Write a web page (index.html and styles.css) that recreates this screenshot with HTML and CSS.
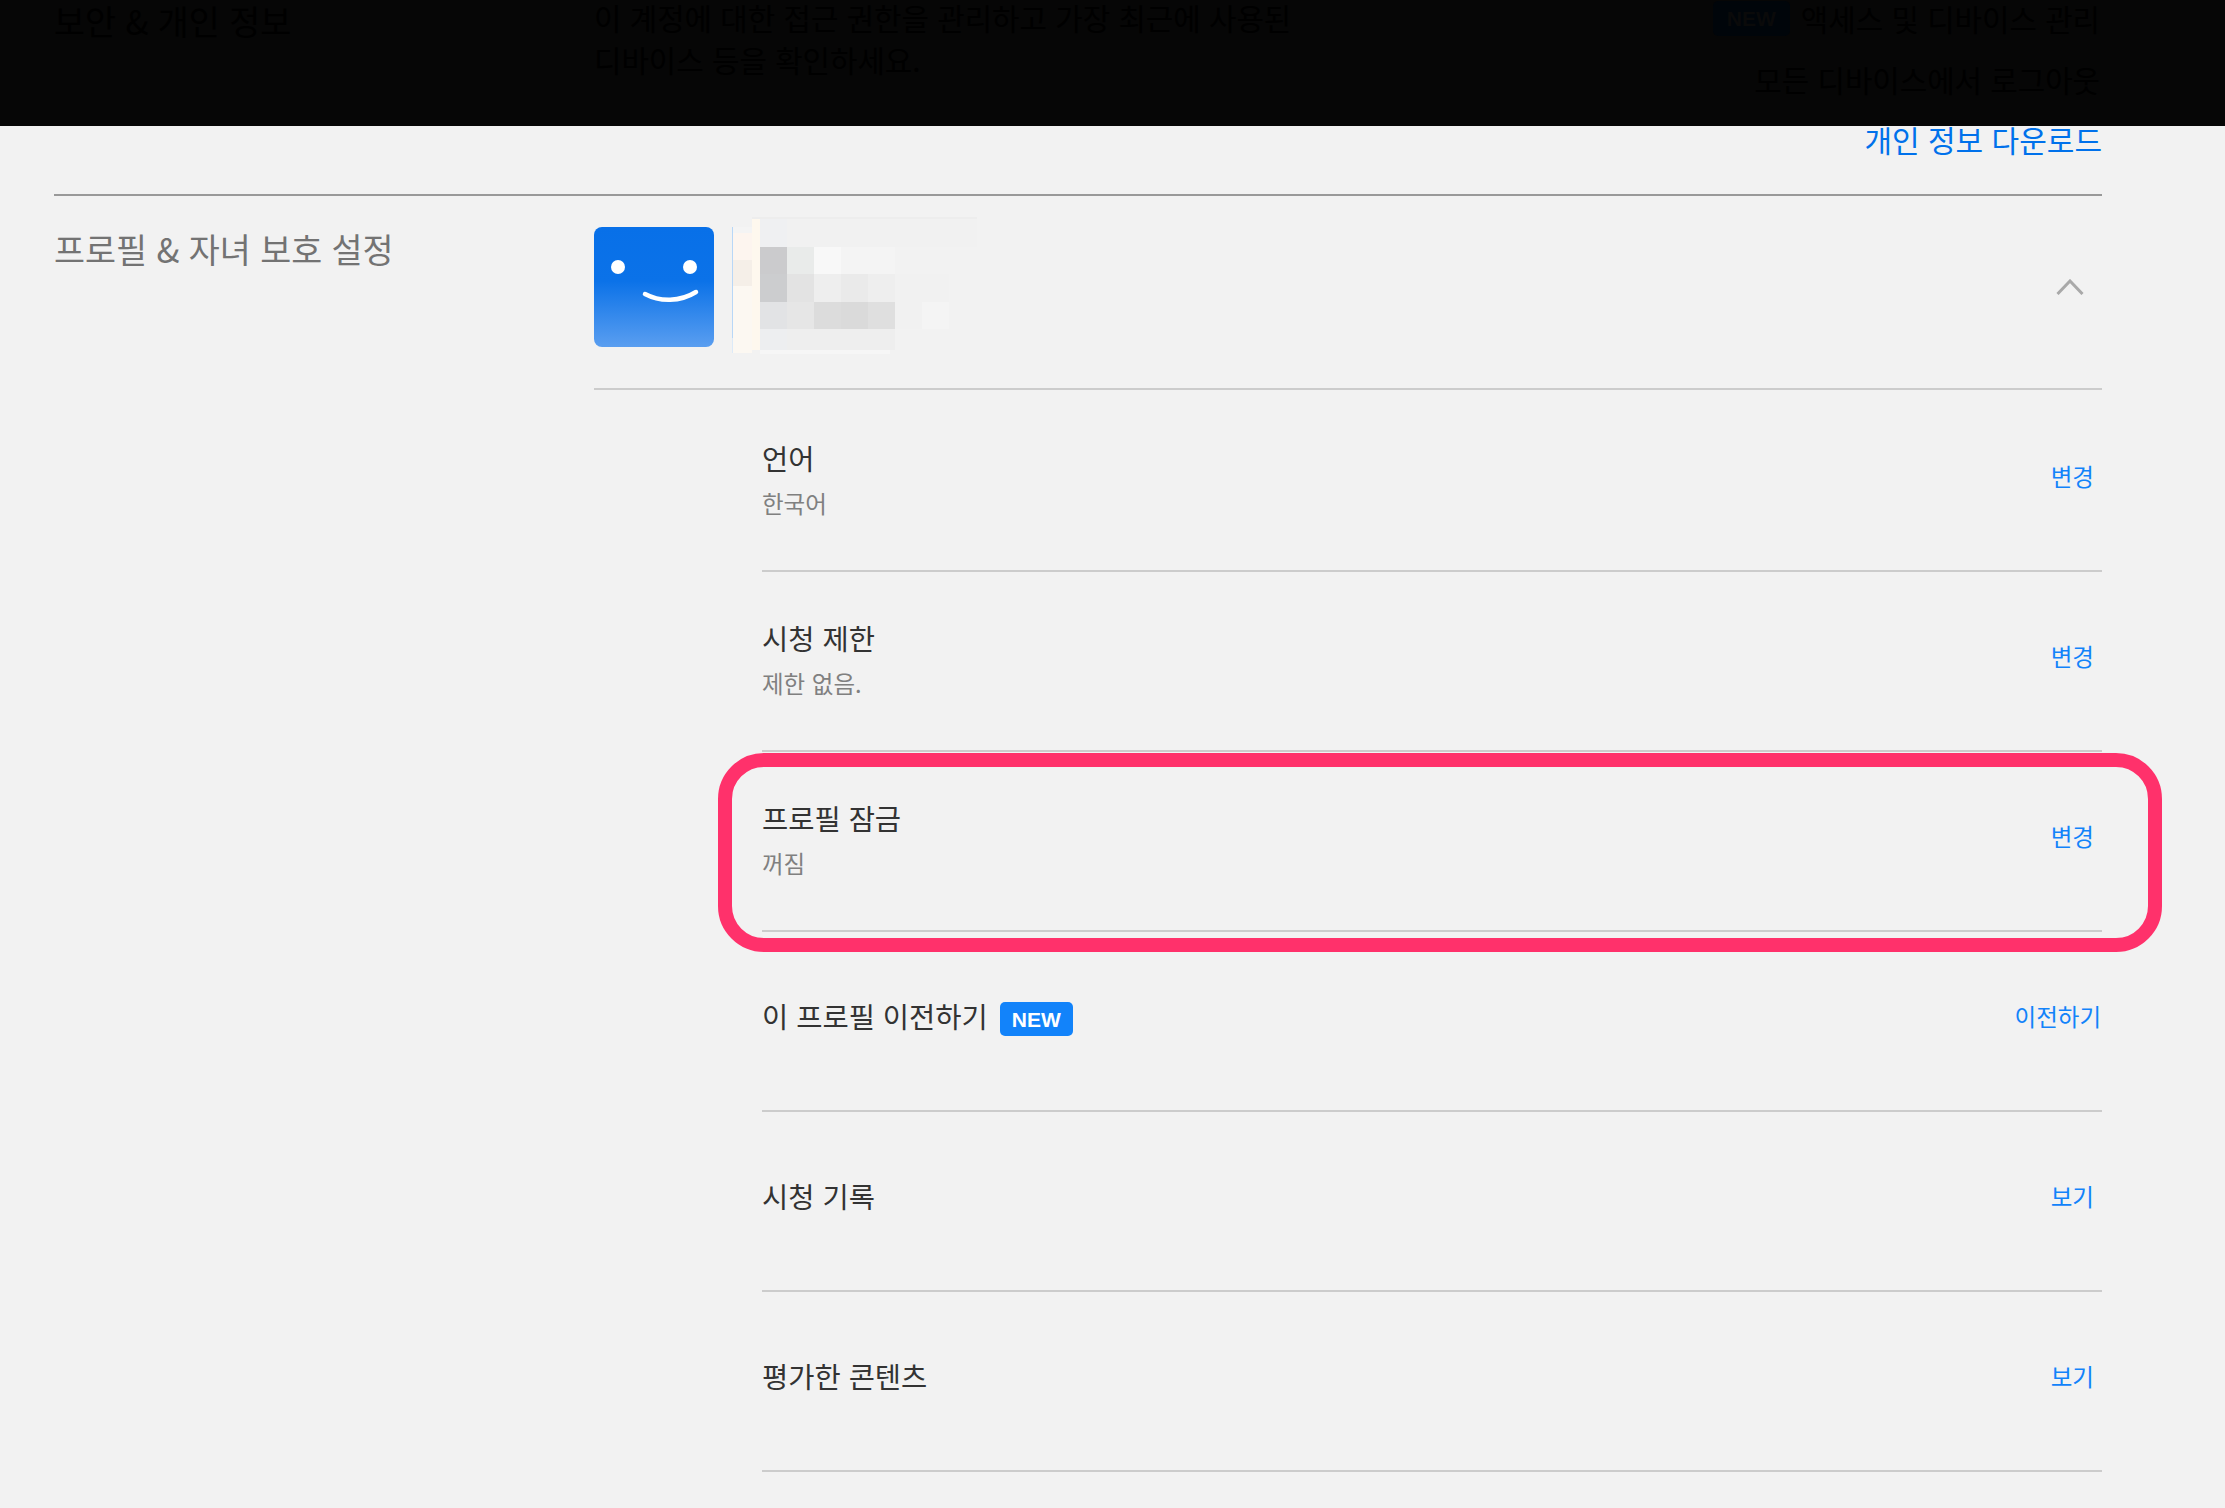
FILE: index.html
```html
<!DOCTYPE html>
<html lang="ko">
<head>
<meta charset="utf-8">
<title>계정</title>
<link rel="stylesheet" href="styles.css">
</head>
<body>
<div class="dark-bar">
  <div class="dark-title">보안 &amp; 개인 정보</div>
  <div class="dark-main">
    <p class="dark-desc">이 계정에 대한 접근 권한을 관리하고 가장 최근에 사용된<br>디바이스 등을 확인하세요.</p>
    <div class="dark-links">
      <div class="dark-link"><span class="badge badge-dark">NEW</span>액세스 및 디바이스 관리</div>
      <div class="dark-link">모든 디바이스에서 로그아웃</div>
    </div>
  </div>
</div>
<div class="download-row"><a class="download-link">개인 정보 다운로드</a></div>
<section class="section">
  <h2 class="section-title">프로필 &amp; 자녀 보호 설정</h2>
  <div class="section-body">
    <div class="profile-head">
      <svg class="avatar" viewBox="0 0 120 120" width="120" height="120" aria-hidden="true">
        <defs>
          <linearGradient id="av" x1="0" y1="0" x2="0" y2="1">
            <stop offset="0" stop-color="#0870e8"/>
            <stop offset="0.45" stop-color="#0b72e8"/>
            <stop offset="1" stop-color="#5a9ef0"/>
          </linearGradient>
        </defs>
        <rect width="120" height="120" rx="8" fill="url(#av)"/>
        <circle cx="24" cy="40" r="7" fill="#fff"/>
        <circle cx="96" cy="40" r="7" fill="#fff"/>
        <path d="M51 67 C66 75 86 75 102 65" fill="none" stroke="#fff" stroke-width="4.5" stroke-linecap="round"/>
      </svg>
      <svg class="redacted" viewBox="0 0 250 140" width="250" height="140" aria-hidden="true">
        <rect x="20" y="0" width="225" height="3" fill="#ededed"/>
        <rect x="0" y="10" width="1" height="111" fill="#b8d7f7"/>
        <rect x="0" y="121" width="1" height="15" fill="#dceaf8"/>
        <rect x="1" y="10" width="19" height="6" fill="#f4f4f4"/>
        <rect x="1" y="16" width="19" height="27" fill="#fdf5ef"/>
        <rect x="1" y="43" width="19" height="26" fill="#f5efe8"/>
        <rect x="1" y="69" width="19" height="67" fill="#fcf8f2"/>
        <rect x="20" y="2" width="8" height="131" fill="#fef8ee"/>
        <rect x="28" y="2" width="27" height="28" fill="#eff0f2"/>
        <rect x="55" y="2" width="190" height="28" fill="#f1f1f1"/>
        <rect x="28" y="30" width="27" height="27" fill="#cbcbcd"/>
        <rect x="55" y="30" width="27" height="27" fill="#e9ebea"/>
        <rect x="82" y="30" width="27" height="27" fill="#f8f8f8"/>
        <rect x="109" y="30" width="54" height="27" fill="#f4f4f4"/>
        <rect x="28" y="57" width="27" height="28" fill="#cccdcf"/>
        <rect x="55" y="57" width="27" height="28" fill="#e3e3e3"/>
        <rect x="82" y="57" width="27" height="28" fill="#eeeeee"/>
        <rect x="109" y="57" width="27" height="28" fill="#eaeaea"/>
        <rect x="136" y="57" width="27" height="28" fill="#eeeeee"/>
        <rect x="163" y="57" width="54" height="28" fill="#f1f1f1"/>
        <rect x="28" y="85" width="27" height="27" fill="#e2e3e5"/>
        <rect x="55" y="85" width="27" height="27" fill="#e6e6e6"/>
        <rect x="82" y="85" width="27" height="27" fill="#dcdcdc"/>
        <rect x="109" y="85" width="27" height="27" fill="#dadada"/>
        <rect x="136" y="85" width="27" height="27" fill="#dfdfdf"/>
        <rect x="163" y="85" width="27" height="27" fill="#f1f1f1"/>
        <rect x="190" y="85" width="27" height="27" fill="#f4f4f4"/>
        <rect x="28" y="112" width="27" height="21" fill="#edeef0"/>
        <rect x="55" y="112" width="108" height="21" fill="#eeeeee"/>
        <rect x="28" y="133" width="130" height="4" fill="#f6f6f6"/>
      </svg>
      <svg class="chevron" viewBox="0 0 28 16" width="28" height="16" aria-hidden="true">
        <path d="M1.5 15 L14 2 L26.5 15" fill="none" stroke="#a9a9a9" stroke-width="3"/>
      </svg>
    </div>
    <ul class="rows">
      <li class="row row-sub">
        <div class="row-main"><div class="row-title">언어</div><div class="row-text">한국어</div></div>
        <a class="row-action row-action-inset">변경</a>
      </li>
      <li class="row row-sub">
        <div class="row-main"><div class="row-title">시청 제한</div><div class="row-text">제한 없음.</div></div>
        <a class="row-action row-action-inset">변경</a>
      </li>
      <li class="row row-sub row-highlighted">
        <div class="row-main"><div class="row-title">프로필 잠금</div><div class="row-text">꺼짐</div></div>
        <a class="row-action row-action-inset">변경</a>
        <span class="highlight"></span>
      </li>
      <li class="row">
        <div class="row-main"><div class="row-title">이 프로필 이전하기<span class="badge">NEW</span></div></div>
        <a class="row-action">이전하기</a>
      </li>
      <li class="row">
        <div class="row-main"><div class="row-title">시청 기록</div></div>
        <a class="row-action row-action-inset">보기</a>
      </li>
      <li class="row">
        <div class="row-main"><div class="row-title">평가한 콘텐츠</div></div>
        <a class="row-action row-action-inset">보기</a>
      </li>
    </ul>
  </div>
</section>
</body>
</html>
```
FILE: styles.css
```css
* { box-sizing: border-box; }
html, body { margin: 0; padding: 0; }
body {
  height: 1508px;
  overflow: hidden;
  background: #f2f2f2;
  font-family: "Noto Sans CJK KR", "Noto Sans", sans-serif;
  color: #333;
}
.dark-bar {
  height: 126px;
  background: #060606;
  color: #000;
  padding: 0 123px 0 54px;
  display: grid;
  grid-template-columns: 540px 1fr;
  overflow: hidden;
}
.dark-title { padding-top: 3px; font-size: 33.7px; line-height: 36px; }
.dark-main { display: flex; justify-content: space-between; }
.dark-desc { margin: -4px 0 0; font-size: 29.8px; line-height: 42px; }
.dark-links {
  display: flex;
  flex-direction: column;
  align-items: flex-end;
  gap: 25px;
  padding-right: 2px;
}
.dark-link { display: flex; align-items: center; font-size: 29.8px; line-height: 36px; }
.badge {
  display: inline-flex;
  align-items: center;
  justify-content: center;
  width: 73px;
  height: 34px;
  margin: 3px 0 -3px 12px;
  border-radius: 5px;
  background: #1283fa;
  color: #fff;
  font-family: "Liberation Sans", sans-serif;
  font-size: 21px;
  font-weight: 700;
  line-height: 1;
}
.badge-dark {
  width: 77px;
  height: 35px;
  margin: 0 11px 0 0;
  background: #00050a;
  color: #0a0a0a;
}
.download-row {
  height: 68px;
  padding-right: 123px;
  text-align: right;
}
.download-link { color: #0071eb; font-size: 30px; line-height: 26px; display: inline-block; }
.section {
  margin: 0 123px 0 54px;
  padding-top: 32px;
  border-top: 2px solid #999;
  display: grid;
  grid-template-columns: 540px 1fr;
}
.section-title {
  margin: 0;
  font-size: 33.7px;
  line-height: 42px;
  font-weight: 400;
  color: #737373;
}
.profile-head {
  display: flex;
  align-items: center;
  height: 162px;
  padding: 0 18px 42px 0;
  border-bottom: 2px solid #ccc;
}
.avatar { display: block; flex: none; }
.redacted { display: block; flex: none; margin-left: 18px; }
.chevron { display: block; flex: none; margin-left: auto; }
.rows { list-style: none; margin: 2px 0 0; padding: 0 0 0 168px; }
.row {
  position: relative;
  display: flex;
  justify-content: space-between;
  align-items: flex-start;
  height: 180px;
  padding-top: 66px;
  border-bottom: 2px solid #ccc;
}
.row-title {
  display: flex;
  align-items: center;
  font-size: 28.5px;
  line-height: 36px;
  color: #333;
}
.row-sub .row-main { margin-top: -18px; }
.row-text {
  margin-top: 10px;
  font-size: 23.5px;
  line-height: 34px;
  color: #808080;
}
.row-action {
  color: #1283fa;
  font-size: 23.5px;
  line-height: 36px;
  padding-right: 1px;
}
.row-action-inset { padding-right: 8px; }
.highlight {
  position: absolute;
  left: -44px;
  right: -60px;
  top: 1px;
  height: 199px;
  border: 14px solid #ff316b;
  border-radius: 46px;
  pointer-events: none;
}
```
